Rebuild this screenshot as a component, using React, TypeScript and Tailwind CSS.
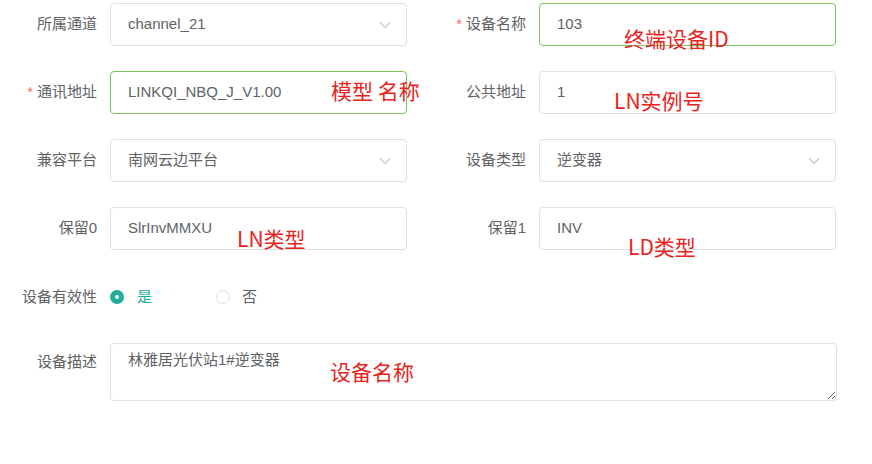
import { ReactNode } from 'react';

const font = { fontFamily: '"Liberation Sans", "Noto Sans CJK SC", sans-serif' };

function Chevron() {
  return (
    <svg width="12" height="8" viewBox="0 0 12 8" className="shrink-0">
      <path d="M1 1.5 L6 6.5 L11 1.5" fill="none" stroke="#c0c4cc" strokeWidth="1.1" />
    </svg>
  );
}

function Field({ label, required, children }: { label: string; required?: boolean; children: ReactNode }) {
  return (
    <div className="flex items-center">
      <div className="w-[98px] shrink-0 pr-[1px] text-right text-[15px] text-[#606266]">
        {required && <span className="mr-[4px] text-[#f56c6c]">*</span>}
        {label}
      </div>
      <div className="ml-[12px] w-[297px]">{children}</div>
    </div>
  );
}

function Input({ value, focused, select }: { value: string; focused?: boolean; select?: boolean }) {
  return (
    <div
      className={`flex h-[43px] items-center justify-between rounded-[4px] border bg-white pl-[17px] pr-[15px] text-[15px] text-[#606266] ${
        focused ? 'border-[#7cc35a]' : 'border-[#dcdfe6]'
      }`}
    >
      <span>{value}</span>
      {select && <Chevron />}
    </div>
  );
}

function Note({ text, className }: { text: string; className: string }) {
  return (
    <span
      className={`pointer-events-none absolute whitespace-nowrap text-[21px] leading-none text-[#e8231d] ${className}`}
      style={{ fontFamily: '"Noto Sans CJK SC", "Liberation Sans", sans-serif' }}
    >
      {text}
    </span>
  );
}

export default function App() {
  return (
    <div className="relative h-[464px] w-[872px] bg-white" style={font}>
      <div className="flex flex-col gap-[25px] pt-[3px]">
        <div className="flex gap-[22px]">
          <Field label="所属通道">
            <Input value="channel_21" select />
          </Field>
          <Field label="设备名称" required>
            <Input value="103" focused />
          </Field>
        </div>
        <div className="flex gap-[22px]">
          <Field label="通讯地址" required>
            <Input value="LINKQI_NBQ_J_V1.00" focused />
          </Field>
          <Field label="公共地址">
            <Input value="1" />
          </Field>
        </div>
        <div className="flex gap-[22px]">
          <Field label="兼容平台">
            <Input value="南网云边平台" select />
          </Field>
          <Field label="设备类型">
            <Input value="逆变器" select />
          </Field>
        </div>
        <div className="flex gap-[22px]">
          <Field label="保留0">
            <Input value="SlrInvMMXU" />
          </Field>
          <Field label="保留1">
            <Input value="INV" />
          </Field>
        </div>
      </div>

      {/* 设备有效性 */}
      <div className="mt-[37px] flex h-[20px] items-center">
        <div className="w-[98px] pr-[1px] text-right text-[15px] text-[#606266]">设备有效性</div>
        <div className="ml-[12px] flex items-center">
          <span className="flex h-[14px] w-[14px] items-center justify-center rounded-full bg-[#1fae9c]">
            <span className="h-[4px] w-[4px] rounded-full bg-white" />
          </span>
          <span className="ml-[13px] text-[15px] text-[#1fae9c]">是</span>
          <span className="ml-[64px] h-[14px] w-[14px] rounded-full border border-[#dcdfe6] bg-white" />
          <span className="ml-[12px] text-[15px] text-[#606266]">否</span>
        </div>
      </div>

      {/* 设备描述 */}
      <div className="mt-[36px] flex items-start">
        <div className="w-[98px] pt-[8px] pr-[1px] text-right text-[15px] text-[#606266]">设备描述</div>
        <textarea
          readOnly
          defaultValue="林雅居光伏站1#逆变器"
          className="ml-[12px] h-[58px] w-[727px] rounded-[4px] border border-[#dcdfe6] bg-white px-[17px] py-[5px] text-[15px] leading-[21px] text-[#606266] outline-none"
          style={font}
        />
      </div>

      <Note text="终端设备ID" className="left-[624px] top-[28px]" />
      <Note text="模型 名称" className="left-[331px] top-[80px]" />
      <Note text="LN实例号" className="left-[614px] top-[90px]" />
      <Note text="LN类型" className="left-[237px] top-[228px]" />
      <Note text="LD类型" className="left-[628px] top-[236px]" />
      <Note text="设备名称" className="left-[330px] top-[361px]" />
    </div>
  );
}
